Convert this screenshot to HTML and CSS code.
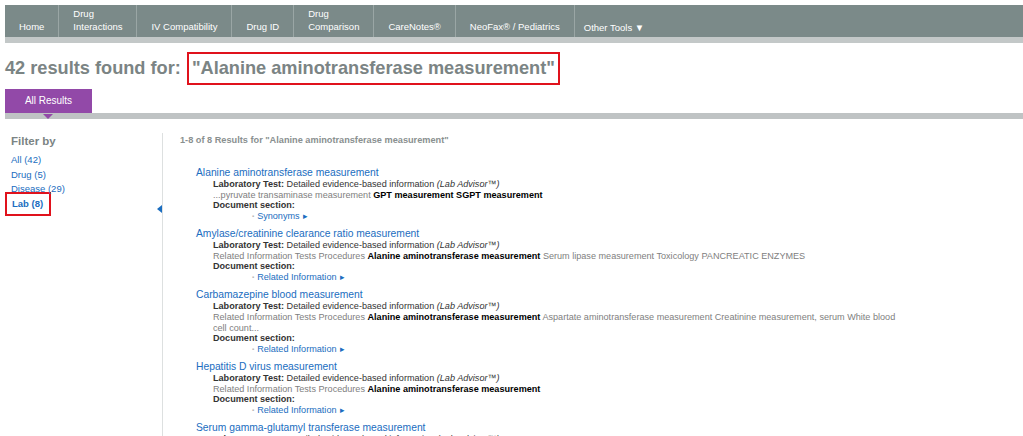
FILE: index.html
```html
<!DOCTYPE html>
<html>
<head>
  <title>Search Results</title>
  <link rel="stylesheet" href="styles.css">
</head>
<body>
  <!-- Top navigation -->
  <header class="topbar">
    <nav class="nav">
      <a class="nav-item" href="#">Home</a>
      <a class="nav-item" href="#">Drug<br>Interactions</a>
      <a class="nav-item" href="#">IV Compatibility</a>
      <a class="nav-item" href="#">Drug ID</a>
      <a class="nav-item" href="#">Drug<br>Comparison</a>
      <a class="nav-item" href="#">CareNotes&reg;</a>
      <a class="nav-item" href="#">NeoFax&reg; / Pediatrics</a>
      <a class="nav-item nav-last" href="#">Other Tools &#9660;</a>
    </nav>
    <div class="nav-strip"></div>
  </header>

  <h1 class="title">42 results found for: <span class="hl">"Alanine aminotransferase measurement"</span></h1>

  <!-- Tabs -->
  <div class="tabs">
    <div class="tab active">All Results</div>
  </div>

  <div class="page">
    <!-- Filter column -->
    <aside class="filters">
      <h2>Filter by</h2>
      <a href="#">All (42)</a>
      <a href="#">Drug (5)</a>
      <a href="#">Disease (29)</a>
      <a href="#" class="lab">Lab (8)</a>
      <span class="collapse"></span>
    </aside>

    <!-- Result list -->
    <main class="results">
      <div class="count">1-8 of 8 Results for "Alanine aminotransferase measurement"</div>

      <div class="result">
        <a class="r-title" href="#">Alanine aminotransferase measurement</a>
        <div class="r-body">
          <div class="r-type"><b>Laboratory Test:</b> Detailed evidence-based information <i>(Lab Advisor&trade;)</i></div>
          <div class="r-snip">...pyruvate transaminase measurement <b>GPT measurement SGPT measurement</b></div>
          <div class="r-type"><b>Document section:</b></div>
          <a class="r-sec" href="#">Synonyms</a>
        </div>
      </div>

      <div class="result">
        <a class="r-title" href="#">Amylase/creatinine clearance ratio measurement</a>
        <div class="r-body">
          <div class="r-type"><b>Laboratory Test:</b> Detailed evidence-based information <i>(Lab Advisor&trade;)</i></div>
          <div class="r-snip">Related Information Tests Procedures <b>Alanine aminotransferase measurement</b> Serum lipase measurement Toxicology PANCREATIC ENZYMES</div>
          <div class="r-type"><b>Document section:</b></div>
          <a class="r-sec" href="#">Related Information</a>
        </div>
      </div>

      <div class="result">
        <a class="r-title" href="#">Carbamazepine blood measurement</a>
        <div class="r-body">
          <div class="r-type"><b>Laboratory Test:</b> Detailed evidence-based information <i>(Lab Advisor&trade;)</i></div>
          <div class="r-snip">Related Information Tests Procedures <b>Alanine aminotransferase measurement</b> Aspartate aminotransferase measurement Creatinine measurement, serum White blood cell count...</div>
          <div class="r-type"><b>Document section:</b></div>
          <a class="r-sec" href="#">Related Information</a>
        </div>
      </div>

      <div class="result">
        <a class="r-title" href="#">Hepatitis D virus measurement</a>
        <div class="r-body">
          <div class="r-type"><b>Laboratory Test:</b> Detailed evidence-based information <i>(Lab Advisor&trade;)</i></div>
          <div class="r-snip">Related Information Tests Procedures <b>Alanine aminotransferase measurement</b></div>
          <div class="r-type"><b>Document section:</b></div>
          <a class="r-sec" href="#">Related Information</a>
        </div>
      </div>

      <div class="result">
        <a class="r-title" href="#">Serum gamma-glutamyl transferase measurement</a>
        <div class="r-body">
          <div class="r-type"><b>Laboratory Test:</b> Detailed evidence-based information <i>(Lab Advisor&trade;)</i></div>
        </div>
      </div>
    </main>
  </div>
</body>
</html>
```

FILE: styles.css
```css
* {
  box-sizing: border-box;
  margin: 0;
  padding: 0;
}

body {
  font-family: "Liberation Sans", Arial, sans-serif;
  background: #fff;
  padding: 5px 0 0 5px;
  overflow: hidden;
}

a {
  text-decoration: none;
}

/* Top navigation bar */
.nav {
  display: flex;
  height: 32px;
  background-color: #7b8a89;
}

.nav-item {
  display: flex;
  align-items: flex-end;
  padding: 0 14px 4px 14px;
  color: #fff;
  font-size: 9.5px;
  line-height: 13px;
  border-right: 1px solid #9aa6a5;
}

.nav-last {
  border-right: none;
  padding-left: 9px;
  padding-bottom: 3px;
}

.nav-strip {
  height: 6px;
  background-color: #c3c8c8;
}

/* Page heading */
.title {
  margin-top: 14px;
  font-size: 18.2px;
  line-height: 22px;
  color: #7b8484;
  font-weight: bold;
}

.hl {
  border: 2px solid #e0121c;
  padding: 4px 3px 5px 3px;
  margin-left: 1px;
}

/* Tabs */
.tabs {
  margin-top: 10px;
  border-bottom: 6px solid #bfc3c4;
  display: flex;
}

.tab {
  position: relative;
  width: 87px;
  height: 24px;
  line-height: 24px;
  text-align: center;
  font-size: 10px;
  color: #fff;
  background-color: #9249a8;
}

.tab::after {
  content: "";
  position: absolute;
  left: 38px;
  bottom: -6px;
  border-left: 5px solid transparent;
  border-right: 5px solid transparent;
  border-top: 5px solid #9249a8;
}

/* Body layout */
.page {
  display: flex;
  margin-top: 14px;
}

.filters {
  position: relative;
  width: 158px;
  padding: 2px 0 0 6px;
  border-right: 1px solid #dde0e0;
  min-height: 320px;
}

.filters h2 {
  font-size: 11.5px;
  color: #7b8484;
  margin-bottom: 6px;
}

.filters a {
  display: block;
  font-size: 9.5px;
  line-height: 14.5px;
  color: #1a6dc0;
}

.filters a.lab {
  font-weight: bold;
  border: 2px solid #e0121c;
  width: 46px;
  margin-left: -6px;
  margin-top: -5px;
  padding: 3px 0 3px 5px;
  line-height: 14px;
}

.collapse {
  position: absolute;
  right: 0;
  top: 72px;
  border-top: 4px solid transparent;
  border-bottom: 4px solid transparent;
  border-right: 5px solid #1a6dc0;
}

.results {
  padding-left: 17px;
  flex: 1;
}

.count {
  font-size: 9.2px;
  font-weight: bold;
  color: #8a9090;
  margin-top: 2px;
  margin-bottom: 22px;
}

.result {
  margin-left: 16px;
  margin-bottom: 6px;
}

.r-title {
  display: block;
  font-size: 10.3px;
  line-height: 12px;
  color: #1a6dc0;
}

.r-body {
  padding-left: 17px;
  font-size: 9.1px;
  line-height: 10.7px;
  width: 705px;
}

.r-type {
  color: #333;
}

.r-snip {
  color: #808080;
}

.r-snip b {
  color: #000;
}

.r-sec {
  display: inline-block;
  margin-left: 39px;
  color: #1a6dc0;
}

.r-sec::before {
  content: "\25AA";
  color: #b5b5b5;
  font-size: 6px;
  margin-right: 3px;
  vertical-align: middle;
}

.r-sec::after {
  content: "\25B8";
  font-size: 9px;
  margin-left: 3px;
}
```
